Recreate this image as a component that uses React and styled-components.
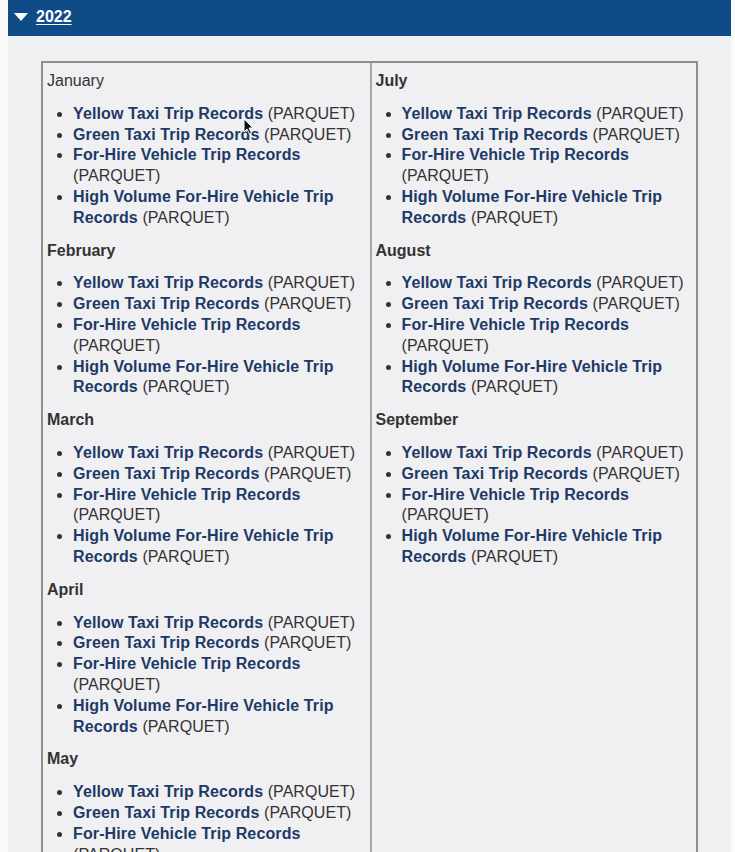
import React from "react";
import styled, { createGlobalStyle } from "styled-components";

const GlobalStyle = createGlobalStyle`
  html, body {
    margin: 0;
    padding: 0;
    overflow: hidden;
    background: #fafafa;
  }
`;

const Page = styled.div`
  padding: 0 4px 0 8px;
  font-family: "Liberation Sans", Arial, sans-serif;
  font-size: 16px;
  line-height: 1.3;
  color: #333;
`;

const YearBar = styled.div`
  display: flex;
  align-items: center;
  gap: 8px;
  height: 35px;
  padding: 0 0 1px 6px;
  background: #0f4c87;
`;

const Caret = styled.svg`
  width: 14px;
  height: 10px;
  margin-top: -2px;
  fill: #fff;
`;

const YearLink = styled.a`
  color: #fff;
  font-weight: 700;
  text-decoration: underline;
  text-underline-offset: 2px;
`;

const Panel = styled.div`
  position: relative;
  background: #f0eff2;
  padding: 25px 33px 0 33px;
`;

const Table = styled.div`
  display: grid;
  grid-template-columns: 1fr 1fr;
  border: 2px solid #8f8f8f;
  border-bottom: none;
`;

const Column = styled.div`
  padding: 8px 4px 0 4px;
  border-left: ${(p) => (p.$divided ? "2px solid #a6a6a6" : "none")};
`;

const Month = styled.h4`
  margin: 0 0 12px;
  font-size: 16px;
  font-weight: ${(p) => (p.$plain ? 400 : 700)};
  color: #333;
`;

const Records = styled.ul`
  margin: 0 0 12px;
  padding-left: 26px;
  list-style: disc;
`;

const Item = styled.li`
  color: #333;
  letter-spacing: 0.06px;
`;

const RecordLink = styled.a`
  color: #1c3a66;
  font-weight: 700;
  letter-spacing: 0.12px;
  text-decoration: none;
`;

const Cursor = styled.svg`
  position: absolute;
  left: 235px;
  top: 82px;
  width: 11px;
  height: 17px;
`;

const RECORDS = [
  "Yellow Taxi Trip Records",
  "Green Taxi Trip Records",
  "For-Hire Vehicle Trip Records",
  "High Volume For-Hire Vehicle Trip Records",
];

const LEFT = ["January", "February", "March", "April", "May", "June"];
const RIGHT = ["July", "August", "September"];

const MonthBlock = ({ name, plain }) => (
  <>
    <Month $plain={plain}>{name}</Month>
    <Records>
      {RECORDS.map((r) => (
        <Item key={r}>
          <RecordLink href="#">{r}</RecordLink> (PARQUET)
        </Item>
      ))}
    </Records>
  </>
);

export default function App() {
  return (
    <Page>
      <GlobalStyle />
      <YearBar>
        <Caret viewBox="0 0 14 10">
          <path d="M0 1 L14 1 L7 9 Z" />
        </Caret>
        <YearLink href="#">2022</YearLink>
      </YearBar>
      <Panel>
        <Table>
          <Column>
            {LEFT.map((m) => (
              <MonthBlock key={m} name={m} plain={m === "January"} />
            ))}
          </Column>
          <Column $divided>
            {RIGHT.map((m) => (
              <MonthBlock key={m} name={m} />
            ))}
          </Column>
        </Table>
        <Cursor viewBox="0 0 11 17">
          <path
            d="M1 1 L1 14 L4 11 L6.5 16 L8.5 15 L6 10 L10 10 Z"
            fill="#111"
            stroke="#fff"
            strokeWidth="1"
            strokeLinejoin="round"
          />
        </Cursor>
      </Panel>
    </Page>
  );
}
